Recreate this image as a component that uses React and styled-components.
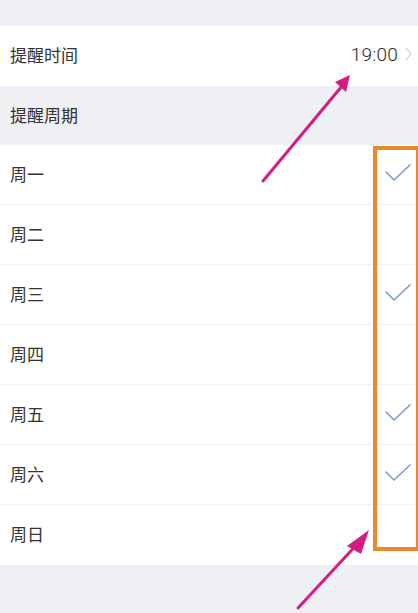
import React from 'react';
import styled, { createGlobalStyle } from 'styled-components';

const GlobalStyle = createGlobalStyle`
    html, body {
        margin: 0;
        padding: 0;
        background: #eff0f4;
    }
    body {
        font-family: 'Noto Sans CJK SC', 'Noto Sans', sans-serif;
        color: #333;
    }
`;

const days = [
    { name: '周一', checked: true },
    { name: '周二', checked: false },
    { name: '周三', checked: true },
    { name: '周四', checked: false },
    { name: '周五', checked: true },
    { name: '周六', checked: true },
    { name: '周日', checked: false },
];

function Check() {
    return (
        <svg width="26" height="20" viewBox="0 0 26 20">
            <path
                d="M1 8 L9 16 L25 1"
                fill="none"
                stroke="#7b9ad6"
                strokeWidth="1.6"
                strokeLinecap="round"
                strokeLinejoin="round"
            />
        </svg>
    );
}

function Chevron() {
    return (
        <svg width="7" height="14" viewBox="0 0 7 14">
            <path
                d="M1 1 L6 7 L1 13"
                fill="none"
                stroke="#d4d4d8"
                strokeWidth="1.2"
            />
        </svg>
    );
}

function Annotations() {
    return (
        <Overlay width="418" height="613" viewBox="0 0 418 613">
            <rect
                x="375"
                y="148"
                width="43"
                height="401"
                fill="none"
                stroke="#e88a2c"
                strokeWidth="4"
            />
            <g stroke="#d61c80" strokeWidth="3" strokeLinecap="round">
                <line x1="263" y1="181" x2="342" y2="86" />
                <line x1="298" y1="608" x2="361" y2="540" />
            </g>
            <g fill="#d61c80">
                <polygon points="350,75 335,82 346,92" />
                <polygon points="369,530 347,546 361,554" />
            </g>
        </Overlay>
    );
}

export default function App() {
    return (
        <Page>
            <GlobalStyle />
            <TopGap />
            <Row height={60} pr={6}>
                <Label>提醒时间</Label>
                <Value>
                    <Time>19:00</Time>
                    <Chevron />
                </Value>
            </Row>
            <SectionHeader>提醒周期</SectionHeader>
            <List>
                {days.map((d, i) => (
                    <Row key={`${d.name}_${i}`} height={60} pr={7} divider={i < days.length - 1}>
                        <Label>{d.name}</Label>
                        <CheckSlot>{d.checked && <Check />}</CheckSlot>
                    </Row>
                ))}
            </List>
            <BottomGap />
            <Annotations />
        </Page>
    );
}

const Page = styled.div`
    position: relative;
    width: 418px;
    height: 613px;
    overflow: hidden;
    background: #eff0f4;
    display: flex;
    flex-direction: column;
`;

const TopGap = styled.div`
    height: 26px;
    flex-shrink: 0;
`;

const BottomGap = styled.div`
    flex: 1;
`;

const List = styled.div`
    display: flex;
    flex-direction: column;
    background: #fff;
`;

const Row = styled.div`
    display: flex;
    align-items: center;
    justify-content: space-between;
    box-sizing: border-box;
    height: ${(props) => props.height}px;
    padding: 0 ${(props) => props.pr}px 0 10px;
    background: #fff;
    border-bottom: ${(props) => (props.divider ? '1px solid #f1f1f3' : 'none')};
    flex-shrink: 0;
`;

const Label = styled.span`
    font-size: 17px;
    line-height: 1;
    color: #333;
    margin-top: -3px;
`;

const Value = styled.div`
    display: flex;
    align-items: center;
    gap: 7px;
    margin-top: -4px;
`;

const Time = styled.span`
    font-family: Roboto, 'Noto Sans', sans-serif;
    font-weight: 300;
    font-size: 19px;
    color: #2a2a2a;
    letter-spacing: 0.2px;
`;

const SectionHeader = styled.div`
    display: flex;
    align-items: center;
    box-sizing: border-box;
    height: 59px;
    padding: 0 10px 3px;
    font-size: 17px;
    color: #333;
    flex-shrink: 0;
`;

const CheckSlot = styled.div`
    width: 26px;
    height: 20px;
    display: flex;
    align-items: center;
    justify-content: center;
    margin-top: -1px;
`;

const Overlay = styled.svg`
    position: absolute;
    left: 0;
    top: 0;
    pointer-events: none;
`;
